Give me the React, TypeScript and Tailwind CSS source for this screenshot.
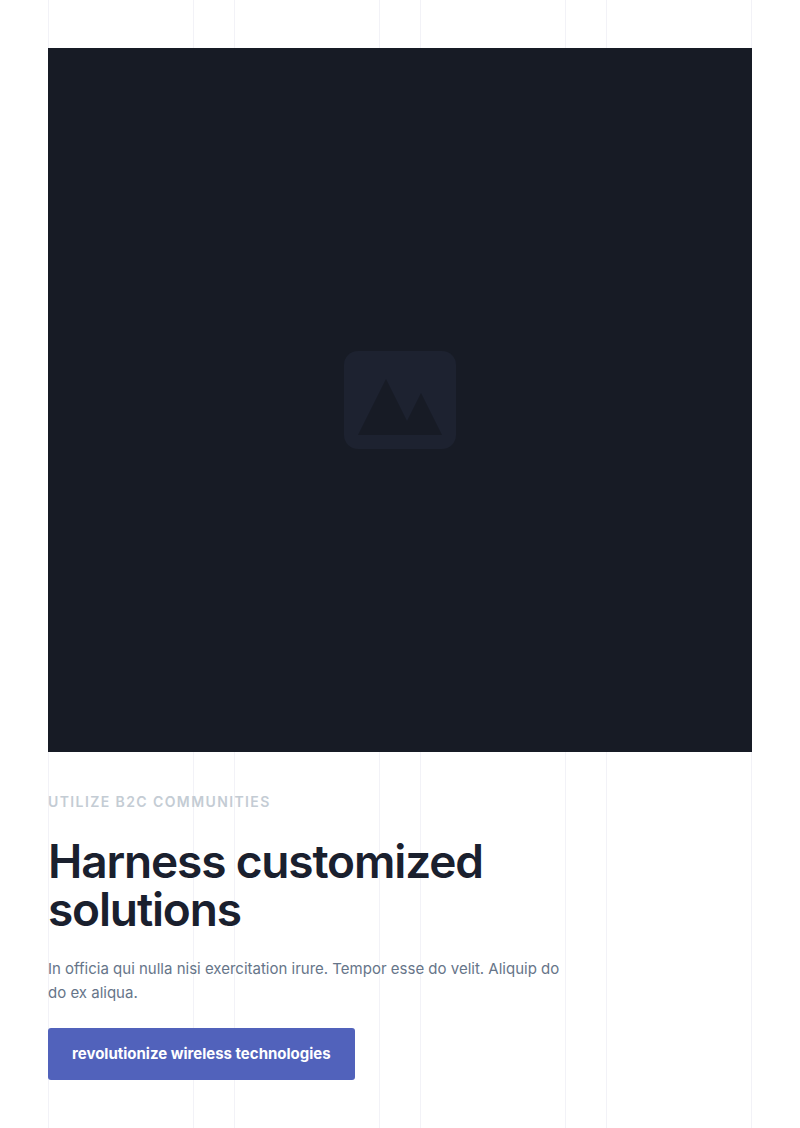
export default function App() {
  return (
    <main className="relative min-h-screen bg-white p-12 font-['Inter','Liberation_Sans',sans-serif] text-[#1a202e]">
      <div aria-hidden="true" className="pointer-events-none absolute inset-0 px-12">
        <div className="grid h-full grid-cols-4 gap-10">
          <div className="border-x border-[#f2f2f7]" />
          <div className="border-x border-[#f2f2f7]" />
          <div className="border-x border-[#f2f2f7]" />
          <div className="border-x border-[#f2f2f7]" />
        </div>
      </div>
      <div className="relative">
        <div className="flex aspect-square w-full items-center justify-center bg-[#171b25]">
          <svg viewBox="0 0 112 98" className="w-28" aria-hidden="true">
            <rect width="112" height="98" rx="14" fill="#1d2230" />
            <path d="M14 84 42 28 63 70 77 42 98 84Z" fill="#171b25" />
          </svg>
        </div>
        <div className="mt-10 max-w-[528px]">
          <p className="text-sm leading-5 font-semibold tracking-widest text-[#c4ccd4] uppercase">Utilize b2c communities</p>
          <h1 className="mt-[25px] text-[46px] leading-[48px] font-semibold tracking-tight">Harness customized solutions</h1>
          <p className="mt-6 text-[15px] leading-6 text-[#667589]">In officia qui nulla nisi exercitation irure. Tempor esse do velit. Aliquip do do ex aliqua.</p>
          <button type="button" className="mt-[23px] h-[52px] rounded-[3px] bg-[#5162bb] px-6 text-[15px] font-bold text-white">revolutionize wireless technologies</button>
        </div>
      </div>
    </main>
  );
}
